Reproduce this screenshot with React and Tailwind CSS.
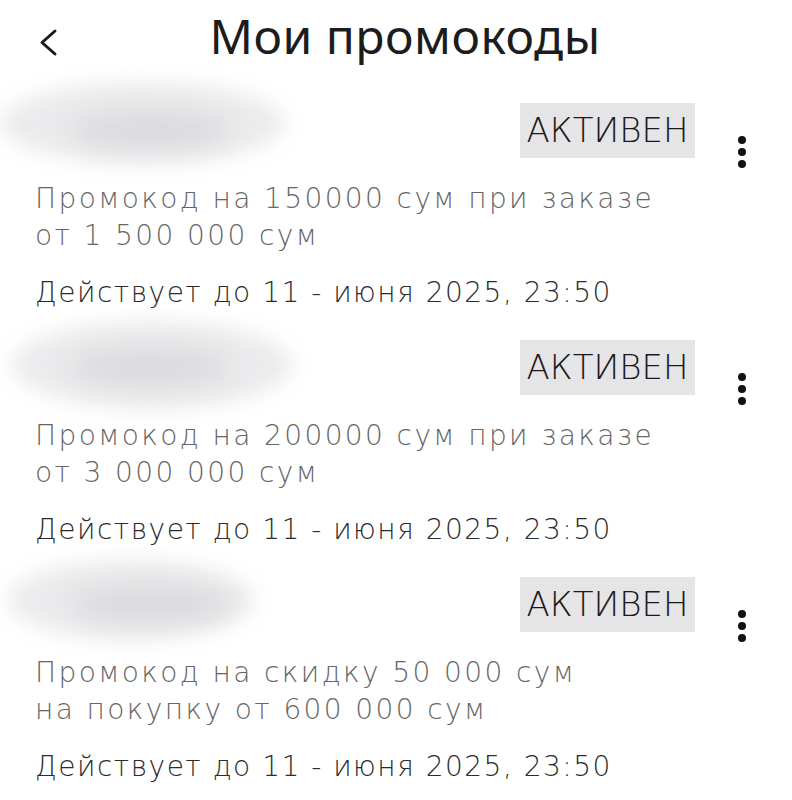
const promos = [
  {
    id: 1,
    lines: ['Промокод на 150000 сум при заказе', 'от 1 500 000 сум'],
    until: 'Действует до 11 - июня 2025, 23:50',
    blob: 'left-[0px] top-[-8px] w-[285px] h-[82px]',
  },
  {
    id: 2,
    lines: ['Промокод на 200000 сум при заказе', 'от 3 000 000 сум'],
    until: 'Действует до 11 - июня 2025, 23:50',
    blob: 'left-[12px] top-[-6px] w-[280px] h-[88px]',
  },
  {
    id: 3,
    lines: ['Промокод на скидку 50 000 сум', 'на покупку от 600 000 сум'],
    until: 'Действует до 11 - июня 2025, 23:50',
    blob: 'left-[8px] top-[-4px] w-[245px] h-[80px]',
  },
];

function Dots() {
  return (
    <div className="flex flex-col items-center gap-[4px]">
      <span className="h-[8px] w-[8px] rounded-full bg-[#111]" />
      <span className="h-[8px] w-[8px] rounded-full bg-[#111]" />
      <span className="h-[8px] w-[8px] rounded-full bg-[#111]" />
    </div>
  );
}

function PromoCard({ promo }) {
  return (
    <div className="pb-[16px]">
      <div className="relative flex h-[90px] items-start">
        {/* blurred promo code */}
        <div className={`absolute ${promo.blob} rounded-[50%] bg-[#ebebed] blur-[10px]`} />
        <div className="absolute left-[70px] top-[22px] h-[36px] w-[160px] rounded-[50%] bg-[#dadadd] blur-[12px]" />
        <div className="ml-auto mt-[13px] flex h-[55px] w-[175px] items-center justify-center bg-[#e5e4e7] text-[34px] font-extralight text-[#1a1a1a] [font-family:'DejaVu_Sans',sans-serif]">
          АКТИВЕН
        </div>
        <div className="ml-[43px] mr-[46px] mt-[46px]">
          <Dots />
        </div>
      </div>
      <p className="relative px-[35px] text-[28px] font-extralight leading-[37px] tracking-[2.4px] text-[#666666] [font-family:'DejaVu_Sans',sans-serif]">
        {promo.lines.map((l) => (
          <span key={l} className="block whitespace-nowrap">
            {l}
          </span>
        ))}
      </p>
      <p className="mt-[20px] whitespace-nowrap px-[35px] text-[28px] font-light leading-[37px] tracking-[1.5px] text-[#2b2b2b] [font-family:'DejaVu_Sans',sans-serif]">
        {promo.until}
      </p>
    </div>
  );
}

export default function App() {
  return (
    <div className="min-h-screen w-[792px] overflow-hidden bg-white">
      <header className="relative flex h-[90px] items-start justify-center">
        <button className="absolute left-[36px] top-[27px]">
          <svg width="24" height="30" viewBox="0 0 24 30" fill="none">
            <path d="M19 4 L6 15.5 L19 27" stroke="#1a1a1a" strokeWidth="3" strokeLinecap="round" strokeLinejoin="round" />
          </svg>
        </button>
        <h1 className="pl-[18px] text-[48px] font-normal leading-[72px] tracking-[0.5px] text-[#1c1c1c] [font-family:'Noto_Sans',sans-serif]">
          Мои промокоды
        </h1>
      </header>
      {promos.map((p) => (
        <PromoCard key={p.id} promo={p} />
      ))}
    </div>
  );
}
